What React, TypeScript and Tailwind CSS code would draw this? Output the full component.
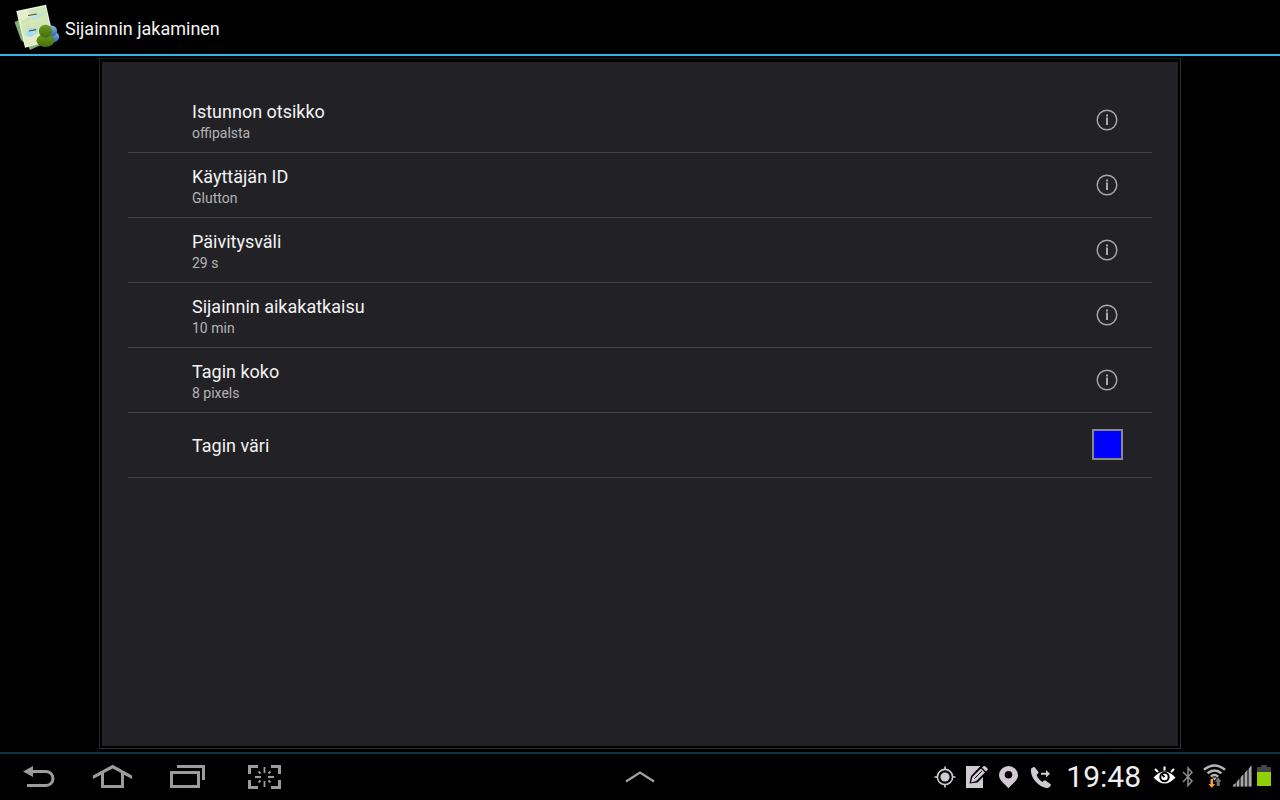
import { useState } from 'react'
import type { ReactNode } from 'react'

type Setting = { title: string; value: string }

const SETTINGS: Setting[] = [
  { title: 'Istunnon otsikko', value: 'offipalsta' },
  { title: 'Käyttäjän ID', value: 'Glutton' },
  { title: 'Päivitysväli', value: '29 s' },
  { title: 'Sijainnin aikakatkaisu', value: '10 min' },
  { title: 'Tagin koko', value: '8 pixels' },
]

function AppIcon() {
  return (
    <svg width="46" height="48" viewBox="14 3 46 48" aria-hidden="true">
      <defs>
        <linearGradient id="green" x1="0" y1="0" x2="0" y2="1">
          <stop offset="0" stopColor="#6d9a22" />
          <stop offset="1" stopColor="#426f08" />
        </linearGradient>
        <linearGradient id="blue" x1="0" y1="0" x2="0" y2="1">
          <stop offset="0" stopColor="#8dbbe6" />
          <stop offset="1" stopColor="#2a62b4" />
        </linearGradient>
        <clipPath id="sheet">
          <path d="M17.5 12L45.5 6L52.5 39L26 46Z" />
        </clipPath>
      </defs>
      <path d="M14.5 22L24 18L45 43L30 50L28 46L21 40Z" fill="#7fb070" />
      <path d="M16.3 11L46 4.7L54 40L25 47.7Z" fill="#f4f6ee" />
      <g clipPath="url(#sheet)">
        <path d="M14 4H56V50H14Z" fill="#cfe6b8" />
        <path d="M17 12L28 9L30 16L20 22Z" fill="#e6efcb" />
        <path d="M24 36L40 33L48 42L26 47Z" fill="#e0edc6" />
        <path d="M24 20L30 19L36 15L44 13L43 15L37 18L31 20Z" fill="#b4e2ee" />
        <path d="M28 29L33 27L38 29L36 34L31 37L26 36Z" fill="#a3dcf0" />
        <path d="M29 8L31 20L33 28L36 44M20 26L31 22L46 19" fill="none" stroke="#efe3b0" strokeWidth="0.8" />
        <path d="M28 15.5L37 14M29 31L36 29.7" stroke="#4b5548" strokeWidth="1.2" />
      </g>
      <ellipse cx="52.5" cy="37" rx="6.8" ry="5.4" fill="url(#blue)" />
      <circle cx="51.5" cy="31" r="5.6" fill="url(#blue)" />
      <ellipse cx="45.5" cy="40.5" rx="9" ry="6.5" fill="url(#green)" />
      <circle cx="45.5" cy="31.2" r="6.5" fill="url(#green)" />
    </svg>
  )
}

function InfoIcon() {
  return (
    <svg width="22" height="22" viewBox="0 0 22 22" fill="none" stroke="#a9a9aa" aria-hidden="true">
      <circle cx="11" cy="11" r="9.8" strokeWidth="1.4" />
      <path d="M11 8.5V16M11 5.5V7.5" strokeWidth="2" />
    </svg>
  )
}

function NavButton({ label, children }: { label: string; children: ReactNode }) {
  return (
    <button type="button" aria-label={label} className="flex items-center">
      {children}
    </button>
  )
}

function NavBar() {
  return (
    <nav className="flex gap-9 pl-[22px] text-[#9c9c9c]">
      <NavButton label="Takaisin">
        <svg width="34" height="26" viewBox="0 0 34 26" fill="none" stroke="currentColor" strokeWidth="3">
          <path d="M10 7.5H24a7 7 0 0 1 0 14H5" />
          <path d="M1 7.5L11 2V13Z" fill="currentColor" stroke="none" />
        </svg>
      </NavButton>
      <NavButton label="Koti">
        <svg width="41" height="26" viewBox="0 0 41 26" fill="currentColor">
          <path d="M20.7 0.8L40 11.5V15L32 10.7V24H9V10.7L1 15V11.5ZM12 9V21H29V9L20.7 4.4Z" fillRule="evenodd" />
        </svg>
      </NavButton>
      <NavButton label="Viimeisimmät">
        <svg width="37" height="26" viewBox="0 0 37 26" fill="none" stroke="currentColor" strokeWidth="3">
          <path d="M2.5 8.5H29.5V22.5H2.5Z" />
          <path d="M8 2.5H34.5V16" />
        </svg>
      </NavButton>
      <NavButton label="Kuvakaappaus">
        <svg width="40" height="26" viewBox="-5 0 40 26" fill="none" stroke="currentColor" strokeWidth="3">
          <path d="M2.5 10V2.5H11M24 2.5H32.5V10M32.5 16V23.5H24M11 23.5H2.5V16" />
          <path d="M8 13H14M21 13H27M17.5 3V9M17.5 17V23M11.5 7.5L13.5 9.5M23.5 7.5L21.5 9.5M11.5 18.5L13.5 16.5M23.5 18.5L21.5 16.5" strokeWidth="1.8" />
        </svg>
      </NavButton>
    </nav>
  )
}

function NotificationIcons() {
  return (
    <div className="flex items-center gap-[10px] text-[#d0cbd0]">
      <svg width="22" height="24" viewBox="0 0 22 24" fill="none" stroke="currentColor" strokeWidth="1.6" aria-hidden="true">
        <circle cx="11" cy="12" r="7.6" />
        <circle cx="11" cy="12" r="4.6" fill="currentColor" stroke="none" />
        <path d="M11 1.5V5M11 19V22.5M0.5 12H4M18 12H21.5" />
      </svg>
      <svg width="22" height="24" viewBox="0 0 22 24" fill="currentColor" aria-hidden="true">
        <path d="M0 1H17V23H0Z" />
        <path d="M3.5 18.5L5 11L15.5 0L22 0V7L11.5 17.5Z" fill="#000" />
        <path d="M5 17.5L6.3 12L15 3.5L19 7.5L10.3 16ZM16 2.5L17.5 1.2Q18.5 0.6 19.5 1.5L21.5 3.5Q22.2 4.5 21.3 5.3L20 6.6Z" />
        <path d="M8.5 13.5L16 6" stroke="#000" strokeWidth="1" />
      </svg>
      <svg width="22" height="24" viewBox="0 0 22 24" fill="currentColor" aria-hidden="true">
        <path fillRule="evenodd" d="M10.5 1A9.5 9.3 0 0 0 1 10.3C1 15 6 18.5 10.5 23.3C15 18.5 20 15 20 10.3A9.5 9.3 0 0 0 10.5 1ZM10.5 6A3.8 3.8 0 1 1 10.5 13.6A3.8 3.8 0 1 1 10.5 6Z" />
      </svg>
      <svg width="22" height="24" viewBox="0 0 22 24" fill="currentColor" aria-hidden="true">
        <path d="M1 4C2 2.5 3.5 2 4.5 2L8.5 7C8.8 8 7.5 9 6.7 10C7.5 13 10 15.5 12.5 17C13.5 16 14.5 15 15.5 15.5L21 19.5C20.5 21.5 19 23 17 23C9 22 0 13 1 4Z" />
        <path d="M11 7.8H16V5L20 8.8L16 12.5V9.8H11Z" />
      </svg>
    </div>
  )
}

function SystemIcons() {
  return (
    <div className="flex items-center">
      <svg width="23" height="24" viewBox="0 0 23 24" fill="none" stroke="#fff" aria-hidden="true">
        <path d="M0.5 12.5Q11.5 0.5 22.5 12.5Q11.5 24.5 0.5 12.5Z" fill="#fff" stroke="none" />
        <circle cx="11.5" cy="12" r="4.2" stroke="#000" strokeWidth="2" />
        <path d="M11.5 12L8.8 9.3" stroke="#000" strokeWidth="1.8" />
        <path d="M11.5 1.5V5.5M2 4L5 7M21 4L18 7" strokeWidth="2" />
      </svg>
      <svg className="ml-[6px]" width="12" height="24" viewBox="0 0 12 24" fill="none" stroke="#8d8d8d" strokeWidth="1.5" aria-hidden="true">
        <path d="M1 7L10 16L6 20.5V3L10 7.5L1 17" />
      </svg>
      <svg className="ml-[9px]" width="23" height="26" viewBox="0 0 23 26" fill="none" stroke="#b5b5b5" strokeWidth="2.4" aria-hidden="true">
        <path d="M1 5.8Q11.5 -2.6 22 5.8M4.5 9.3Q11.5 3.6 18.5 9.3M7.8 12.6Q11.5 9.4 15.2 12.6" />
        <path d="M11.5 16.5L9 13.5H14Z" fill="#b5b5b5" stroke="none" />
        <path d="M7.5 15H10V20H12L8.8 24L5.5 20H7.5Z" fill="#ff9d2e" stroke="none" />
        <path d="M13.7 22V17.5H11.8L15.2 13.5L18.5 17.5H16.7V22Z" fill="#777" stroke="none" />
      </svg>
      <svg className="ml-[6px]" width="20" height="24" viewBox="0 0 20 24" aria-hidden="true">
        <path d="M0.5 21.5L19.5 0.5V21.5Z" fill="#4a4a4a" />
        <path d="M1 21.5V20L3.5 18V21.5ZM5 21.5V16.5L7 14.3V21.5ZM9 21.5V12L11 9.8V21.5ZM13 21.5V7.6L15 5.4V21.5ZM17 21.5V3.2L19.5 0.5V21.5Z" fill="#a8a8a8" />
      </svg>
      <svg className="ml-[5px]" width="14" height="24" viewBox="0 0 14 24" aria-hidden="true">
        <path d="M4 0H10V2H14V7H0V2H4Z" fill="#444" />
        <path d="M0 7H14V21H0Z" fill="#8fd000" />
      </svg>
    </div>
  )
}

function SettingRow({ title, value }: Setting) {
  return (
    <li className="flex h-[65px] items-center justify-between border-b border-[#424245] pr-[34px] pl-16">
      <div className="pt-[2px]">
        <h2 className="text-[18px] leading-6 text-[#f3f3f3]">{title}</h2>
        <p className="text-[14px] leading-[19px] text-[#b4b4b5]">{value}</p>
      </div>
      <button type="button" aria-label={`Tietoja: ${title}`}>
        <InfoIcon />
      </button>
    </li>
  )
}

export default function App() {
  const [expanded, setExpanded] = useState(false)

  return (
    <div className="flex min-h-screen flex-col bg-black font-[Roboto,sans-serif]">
      <header className="flex h-14 items-center gap-[5px] border-b-2 border-[#33b5e5] pl-[14px]">
        <AppIcon />
        <h1 className="pt-[3px] text-[18px] leading-6 text-[#f3f3f3]">Sijainnin jakaminen</h1>
      </header>

      <main className="flex flex-1 flex-col px-[99px] pt-[2px] pb-[3px]">
        <div className="flex flex-1 flex-col border border-[#303030] border-t-[#1c1c1c] border-l-[#222] px-[2px] pt-[3px] pb-[2px]">
          <ul className="flex-1 bg-[#222126] px-[26px] pt-[26px]">
            {SETTINGS.map(s => <SettingRow key={s.title} {...s} />)}
            <li className="flex h-[65px] items-center justify-between border-b border-[#424245] pr-[29px] pb-px pl-16">
              <h2 className="pt-[3px] text-[18px] leading-6 text-[#f3f3f3]">Tagin väri</h2>
              <button type="button" aria-label="Tagin väri" className="size-[31px] border-2 border-[#888] bg-[#0000ff]" />
            </li>
          </ul>
        </div>
      </main>

      <footer className="grid h-12 grid-cols-[1fr_64px_1fr] border-t-2 border-[#0b3544]">
        <NavBar />
        <button
          type="button"
          aria-label="Näytä pikavalikko"
          aria-expanded={expanded}
          onClick={() => setExpanded(!expanded)}
          className="flex items-center justify-center text-[#a0a0a0]"
        >
          <svg width="30" height="14" viewBox="0 0 30 14" fill="none" stroke="currentColor" strokeWidth="2.2">
            <path d="M1 11.5L15 2.5L29 11.5" />
          </svg>
        </button>
        <div className="flex items-center justify-end pr-[9px]">
          <NotificationIcons />
          <time className="mr-3 ml-[14px] text-[30px] leading-9 text-[#f0f0f0]">19:48</time>
          <SystemIcons />
        </div>
      </footer>
    </div>
  )
}
